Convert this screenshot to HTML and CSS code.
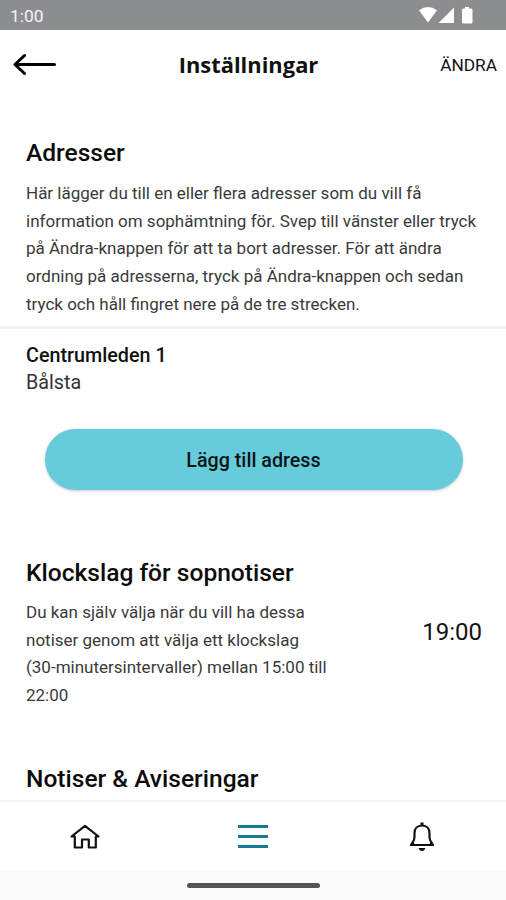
FILE: index.html
```html
<!DOCTYPE html>
<html lang="sv">
<head>
<meta charset="utf-8">
<title>Inställningar</title>
<link rel="stylesheet" href="styles.css">
</head>
<body>
<div class="screen">
  <div class="status">
    <span class="clock">1:00</span>
    <svg class="status-icons" width="54" height="18" viewBox="0 0 54 18">
      <path d="M0 3.200Q9 -3 18 3.200L9 15.500Z"/>
      <path d="M35 0.500V16H19.500Z"/>
      <path d="M46 0h4v1.500h2q1.500 0 1.500 1.500v12q0 1.500-1.500 1.500h-7.500q-1.500 0-1.500-1.500v-12q0-1.500 1.500-1.500h1.500z"/>
    </svg>
  </div>
  <header class="header">
    <svg class="back" width="44" height="24" viewBox="0 0 44 24">
      <path d="M41.500 11.500H2M11.500 2.500L2 11.500L11.500 20.500"/>
    </svg>
    <h1 class="title">Inställningar</h1>
    <span class="edit">ÄNDRA</span>
  </header>
  <main class="content">
    <section class="intro">
      <h2 class="heading">Adresser</h2>
      <p class="copy">Här lägger du till en eller flera adresser som du vill få<br>information om sophämtning för. Svep till vänster eller tryck<br>på Ändra-knappen för att ta bort adresser. För att ändra<br>ordning på adresserna, tryck på Ändra-knappen och sedan<br>tryck och håll fingret nere på de tre strecken.</p>
    </section>
    <section class="address">
      <div class="street">Centrumleden 1</div>
      <div class="city">Bålsta</div>
    </section>
    <button class="add">Lägg till adress</button>
    <section class="schedule">
      <div>
        <h2 class="heading">Klockslag för sopnotiser</h2>
        <p class="copy">Du kan själv välja när du vill ha dessa<br>notiser genom att välja ett klockslag<br>(30-minutersintervaller) mellan 15:00 till<br>22:00</p>
      </div>
      <span class="time">19:00</span>
    </section>
    <h2 class="heading notices">Notiser &amp; Aviseringar</h2>
  </main>
  <nav class="tabs">
    <svg width="30" height="26" viewBox="0 0 30 26" class="home">
      <path d="M1.500 12.500L15 1.800L28.500 12.500H25.800V23.500H18.800V15.500H12V23.500H4.800V12.500Z"/>
    </svg>
    <svg width="30" height="26" viewBox="0 0 30 26" class="menu">
      <path d="M0 2.500H30M0 12.500H30M0 22.500H30"/>
    </svg>
    <svg width="26" height="30" viewBox="0 0 26 30" class="bell">
      <path d="M13 3.500C8 3.500 5.500 7 5.500 11V15Q5.500 18 3.500 20.500L2 23H24L22.500 20.500Q20.500 18 20.500 15V11C20.500 7 18 3.500 13 3.500Z"/>
      <path class="solid" d="M11.500 0.500h3v3h-3zM9.500 26h7Q15.500 29 13 29T9.500 26ZM1 24L4 19.500L6 23ZM25 24L22 19.500L20 23Z"/>
    </svg>
  </nav>
  <footer class="gesture"><div class="handle"></div></footer>
</div>
</body>
</html>
```
FILE: styles.css
```css
* { box-sizing: border-box; }
body { margin: 0; background: #fff; color: #111; font-family: Roboto, sans-serif; }
h1, h2, p { margin: 0; }
svg { display: block; }
.screen { width: 506px; height: 900px; display: flex; flex-direction: column; overflow: hidden; }
.status { height: 30px; flex: none; background: #8c8d91; display: flex; justify-content: space-between; padding: 7px 33px 0 10px; }
.clock { color: #f4f4f5; font-size: 17.400px; line-height: 19px; }
.status-icons { fill: #fff; }
.header { height: 70px; flex: none; display: grid; grid-template-columns: 1fr auto 1fr; align-items: center; padding: 0 9px 0 0; }
.back { margin-left: 13px; fill: none; stroke: #000; stroke-width: 3; stroke-linecap: round; stroke-linejoin: round; }
.title { font: 700 21.900px/28px "Open Sans", sans-serif; color: #111; }
.edit { justify-self: end; font-size: 17.300px; line-height: 24px; }
.content { flex: 1; min-height: 0; overflow: hidden; }
.intro { padding: 37px 26px 0; height: 229px; border-bottom: 3px solid #f1f1f1; }
.heading { font-size: 24.550px; line-height: 32px; font-weight: 500; color: #0c0c0c; }
.copy { font-size: 17px; line-height: 27.700px; margin-top: 11px; color: #3a3a3a; white-space: nowrap; }
.address { padding: 13px 26px 0; height: 100px; }
.street { font-size: 19.750px; line-height: 27px; font-weight: 500; }
.city { font-size: 19.750px; line-height: 27px; color: #333; }
.add { display: block; width: 418px; height: 61px; margin: 0 auto 0 44.500px; padding: 2px 0 0; border: 0; border-radius: 31px; background: #66ccdb; box-shadow: 0 1px 3px rgba(0,0,0,.22); font: 500 19.700px/24px Roboto, sans-serif; color: #0c1416; }
.schedule { display: flex; justify-content: space-between; align-items: center; padding: 67px 24px 0 26px; }
.schedule .copy { margin-top: 10px; }
.time { font-size: 24px; line-height: 30px; margin-bottom: 3px; }
.notices { padding: 53px 26px 0; }
.tabs { height: 71px; flex: none; border-top: 2px solid #f4f4f4; background: #fff; display: grid; grid-template-columns: repeat(3, 1fr); align-items: center; justify-items: center; }
.home, .menu, .bell { fill: none; stroke: #111; stroke-width: 2.200; stroke-linejoin: round; }
.home { margin-left: 1px; }
.menu { stroke: #137c94; stroke-width: 3; }
.bell .solid { fill: #111; stroke: none; }
.gesture { height: 29px; flex: none; background: #fafafa; display: flex; justify-content: center; padding-top: 12px; }
.handle { width: 133px; height: 5px; border-radius: 3px; background: #555; }
```
